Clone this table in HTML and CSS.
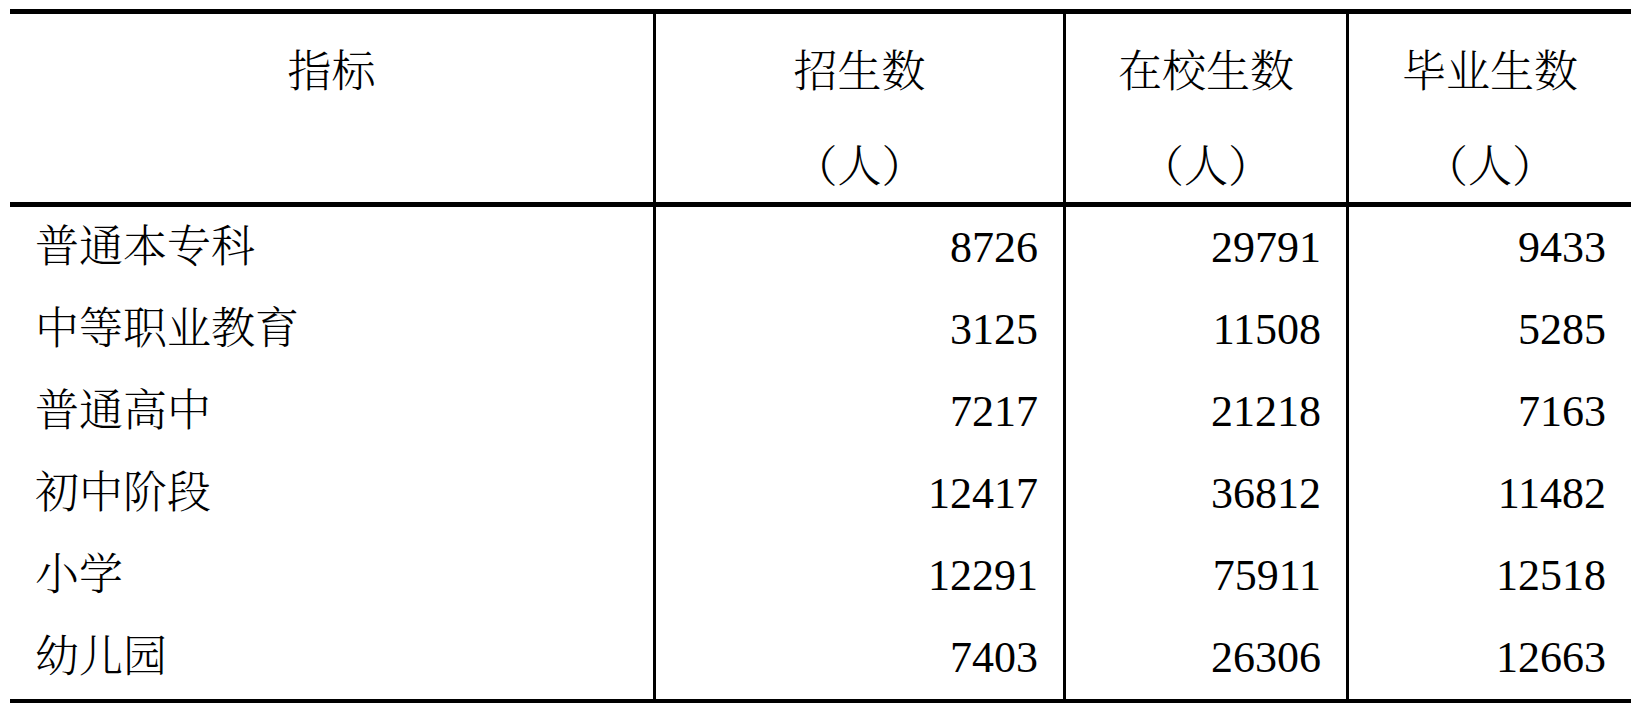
FILE: index.html
```html
<!DOCTYPE html>
<html>
<head>
<meta charset="utf-8">
<title>教育统计</title>
<link rel="stylesheet" href="styles.css">
</head>
<body>
<table class="stats">
  <colgroup>
    <col class="c1">
    <col class="c2">
    <col class="c3">
    <col class="c4">
  </colgroup>
  <thead>
    <tr>
      <th class="name-h"><span class="line">指标</span></th>
      <th><span class="line">招生数</span><span class="line unit">（人）</span></th>
      <th><span class="line">在校生数</span><span class="line unit">（人）</span></th>
      <th><span class="line">毕业生数</span><span class="line unit">（人）</span></th>
    </tr>
  </thead>
  <tbody>
    <tr><td class="name">普通本专科</td><td>8726</td><td>29791</td><td>9433</td></tr>
    <tr><td class="name">中等职业教育</td><td>3125</td><td>11508</td><td>5285</td></tr>
    <tr><td class="name">普通高中</td><td>7217</td><td>21218</td><td>7163</td></tr>
    <tr><td class="name">初中阶段</td><td>12417</td><td>36812</td><td>11482</td></tr>
    <tr><td class="name">小学</td><td>12291</td><td>75911</td><td>12518</td></tr>
    <tr><td class="name">幼儿园</td><td>7403</td><td>26306</td><td>12663</td></tr>
  </tbody>
</table>
</body>
</html>
```

FILE: styles.css
```css
html, body {
  margin: 0;
  padding: 0;
  background: #fff;
}
body {
  padding: 9px 1px 0 10px;
  font-family: "Liberation Serif", "Noto Serif", "Nimbus Roman", FreeSerif, "Noto Serif CJK SC", "Source Han Serif SC", "Noto Sans CJK SC", serif;
  font-size: 44px;
  color: #000;
}
.stats {
  table-layout: fixed;
  width: 1621px;
  border-collapse: separate;
  border-spacing: 0;
  border-top: 5px solid #000;
  border-bottom: 4px solid #000;
}
.c1 { width: 643px; }
.c2 { width: 410px; }
.c3 { width: 283px; }
.c4 { width: 285px; }

.stats th,
.stats td {
  box-sizing: border-box;
  padding: 0 25px;
}
.stats th + th,
.stats td + td {
  border-left: 3px solid #000;
}
.stats th {
  height: 193px;
  vertical-align: top;
  text-align: center;
  font-weight: 300;
  padding-top: 37px;
  padding-bottom: 0;
  border-bottom: 5px solid #000;
  line-height: 44px;
}
.line {
  display: block;
}
.unit {
  margin-top: 51px;
}
.stats td {
  height: 82px;
  line-height: 44px;
  vertical-align: middle;
  text-align: right;
  font-weight: 400;
}
.stats td.name {
  text-align: left;
  font-weight: 300;
}
```
